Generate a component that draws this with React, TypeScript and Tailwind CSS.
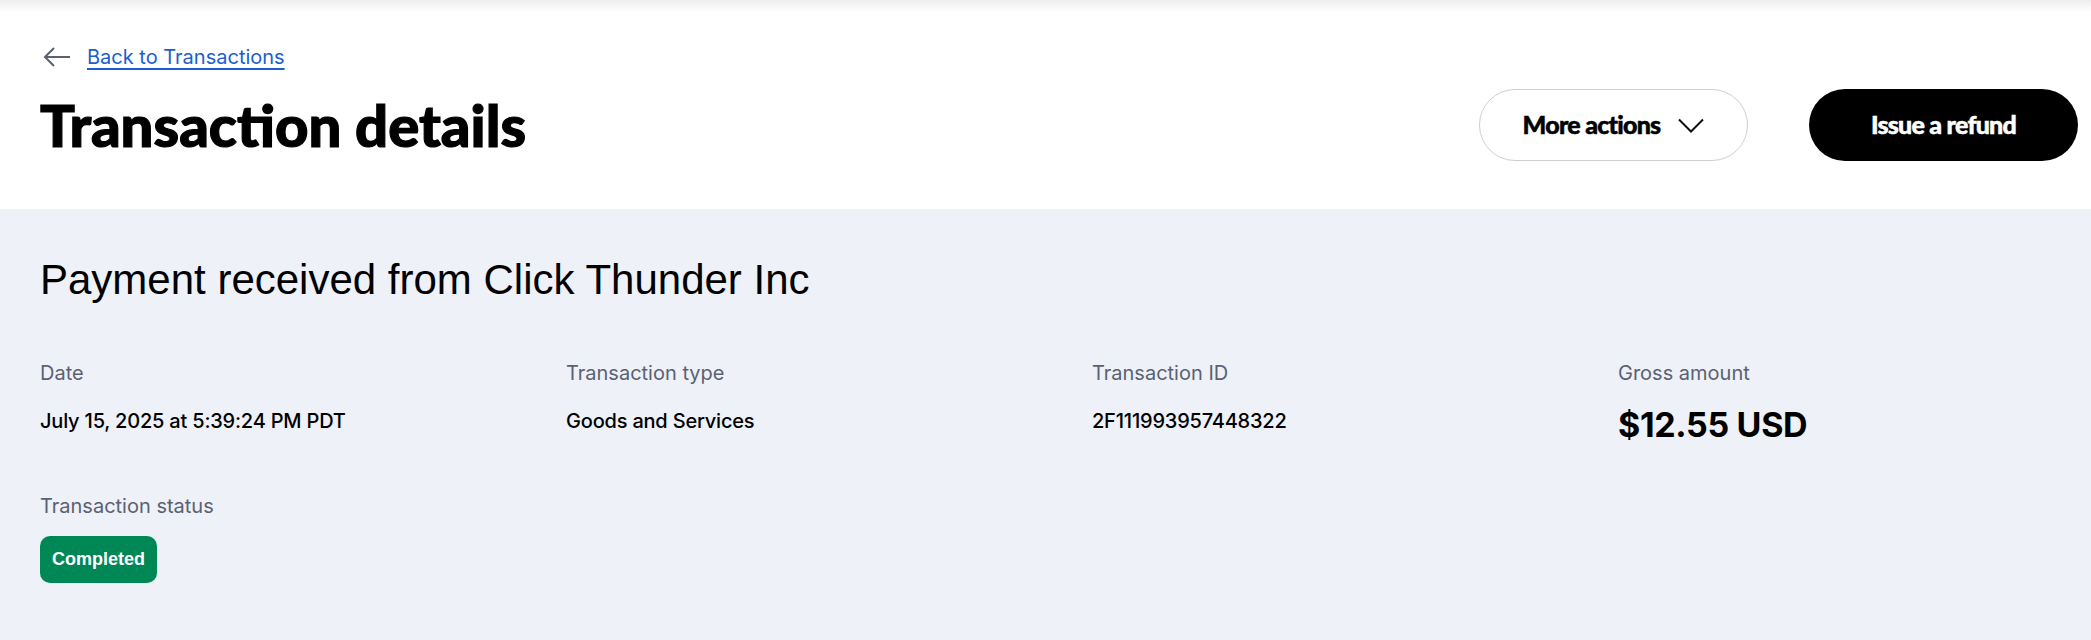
import React from 'react';

const labelCls = "font-['Inter',sans-serif] text-[20px] leading-[28px] text-[#5a6170]";
const valueCls = "font-['Inter',sans-serif] text-[20px] leading-[28px] font-medium tracking-[-0.01em] text-black";

const Detail = ({ label, children }: { label: string; children: React.ReactNode }) => (
  <div className="flex flex-col gap-[20px]">
    <div className={labelCls}>{label}</div>
    {children}
  </div>
);

const TransactionDetails = () => {
  return (
    <div className="min-h-screen w-full overflow-hidden bg-white">
      <div className="h-[12px] bg-gradient-to-b from-[#eeeeee] to-white" />

      <header className="pl-[40px] pr-[13px] pt-[31px] pb-[48px]">
        <div className="flex h-[28px] items-center gap-[16px] pl-[3px]">
          <svg width="28" height="22" viewBox="0 0 28 22" fill="none" stroke="#5b6170" strokeWidth="2">
            <path d="M27 11H2" />
            <path d="M11 2L2 11l9 9" />
          </svg>
          <a
            href="#"
            className="font-['Inter',sans-serif] text-[20px] leading-[28px] text-[#1a5fd1] underline underline-offset-[4px] decoration-[2px]"
          >
            Back to Transactions
          </a>
        </div>

        <div className="mt-[18px] flex h-[72px] items-center justify-between">
          <h1 className="font-['Lato',sans-serif] text-[58px] leading-[64px] font-black text-black [-webkit-text-stroke:1.2px_black]">
            Transaction details
          </h1>
          <div className="flex items-center gap-[61px]">
            <button className="flex h-[72px] w-[269px] items-center justify-center gap-[18px] rounded-full border border-[#cfcfcf] bg-white font-['Lato',sans-serif] text-[25px] font-black tracking-[-0.03em] text-black [-webkit-text-stroke:0.5px_black]">
              More actions
              <svg width="26" height="15" viewBox="0 0 26 15" fill="none" stroke="#111" strokeWidth="2">
                <path d="M1 1.5l12 12 12-12" />
              </svg>
            </button>
            <button className="flex h-[72px] w-[269px] items-center justify-center rounded-full bg-black font-['Lato',sans-serif] text-[25px] font-black tracking-[-0.03em] text-white [-webkit-text-stroke:0.5px_white]">
              Issue a refund
            </button>
          </div>
        </div>
      </header>

      <main className="min-h-[431px] bg-[#eef1f8] px-[40px] pt-[47px] pb-[40px]">
        <h2 className="font-['Liberation_Sans',Arial,sans-serif] text-[42px] leading-[48px] text-black">
          Payment received from Click Thunder Inc
        </h2>

        <div className="mt-[55px] grid grid-cols-[526px_526px_526px_1fr]">
          <Detail label="Date">
            <div className={valueCls}>July 15, 2025 at 5:39:24 PM PDT</div>
          </Detail>
          <Detail label="Transaction type">
            <div className={valueCls}>Goods and Services</div>
          </Detail>
          <Detail label="Transaction ID">
            <div className={valueCls}>2F111993957448322</div>
          </Detail>
          <Detail label="Gross amount">
            <div className="-mt-[2px] font-['Inter',sans-serif] text-[34px] leading-[40px] font-bold tracking-[-0.01em] text-black">$12.55 USD</div>
          </Detail>
        </div>

        <div className="mt-[47px] flex flex-col items-start gap-[16px]">
          <div className={labelCls}>Transaction status</div>
          <span className="flex h-[47px] items-center rounded-[10px] bg-[#008756] px-[12px] font-['Liberation_Sans',Arial,sans-serif] text-[18px] font-bold text-white">
            Completed
          </span>
        </div>
      </main>
    </div>
  );
};

export default TransactionDetails;
